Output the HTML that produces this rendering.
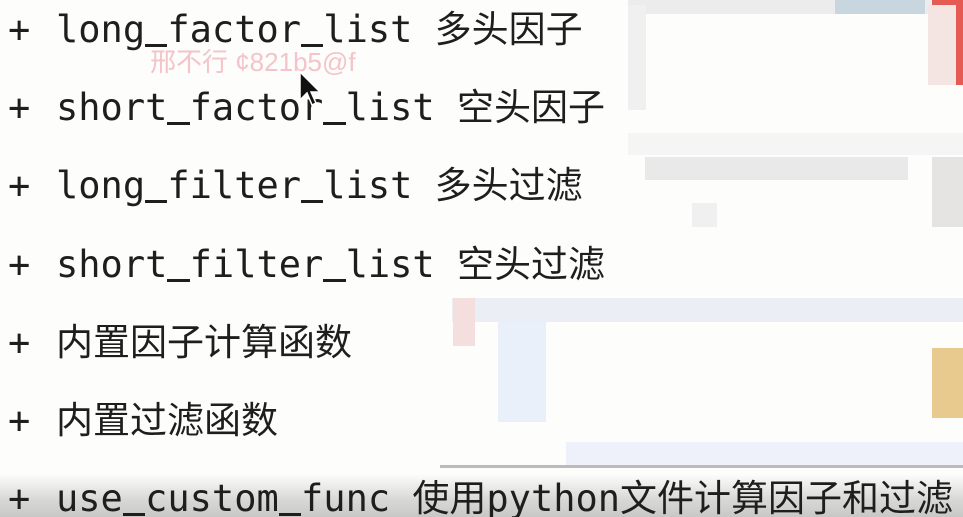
<!DOCTYPE html>
<html><head><meta charset="utf-8"><style>
html,body{margin:0;padding:0;width:963px;height:517px;overflow:hidden;background:#fdfdfc;position:relative}
.l{position:absolute;left:56px;font-family:"DejaVu Sans Mono","Liberation Mono","Noto Sans CJK SC",monospace;font-size:37px;line-height:60px;color:#1e1e1e;white-space:pre;z-index:2}
.p{position:absolute;left:8px;font-family:"DejaVu Sans Mono",monospace;font-size:37px;line-height:60px;color:#1e1e1e;z-index:2}
.u{display:inline-block;width:0.602em;height:3px;background:#1e1e1e;vertical-align:-5px}
.b{position:absolute}
</style></head><body>
<div class="b" style="left:628px;top:0;width:335px;height:14px;background:#ececec"></div>
<div class="b" style="left:835px;top:0;width:90px;height:14px;background:#c8d7df"></div>
<div class="b" style="left:932px;top:0;width:31px;height:85px;background:#e55a52"></div>
<div class="b" style="left:928px;top:5px;width:28px;height:80px;background:#f4e4e2"></div>
<div class="b" style="left:628px;top:5px;width:18px;height:105px;background:#f0f0f0"></div>
<div class="b" style="left:628px;top:133px;width:335px;height:22px;background:#f5f5f5"></div>
<div class="b" style="left:645px;top:157px;width:263px;height:23px;background:#e9e9e9"></div>
<div class="b" style="left:932px;top:157px;width:31px;height:70px;background:#e6e4e3"></div>
<div class="b" style="left:692px;top:203px;width:25px;height:24px;background:#f0f0f0"></div>
<div class="b" style="left:452px;top:298px;width:511px;height:24px;background:#eceef5"></div>
<div class="b" style="left:453px;top:298px;width:22px;height:48px;background:#f5dede"></div>
<div class="b" style="left:498px;top:322px;width:48px;height:100px;background:#eaf0fa"></div>
<div class="b" style="left:932px;top:348px;width:31px;height:70px;background:#e8c98e"></div>
<div class="b" style="left:566px;top:442px;width:397px;height:24px;background:#eef1f9"></div>
<div class="b" style="left:440px;top:465px;width:523px;height:3px;background:#bbb"></div>
<div class="b" style="left:0;top:474px;width:963px;height:43px;background:linear-gradient(#fdfdfc,#d8d8d6 60%,#c8c8c6)"></div>
<div class="b" style="left:150px;top:42px;width:240px;height:34px;font-family:'Liberation Sans','Noto Sans CJK SC',sans-serif;font-size:26px;color:#f4c4c8;z-index:3">邢不行 ¢821b5@f</div>
<svg class="b" style="left:298px;top:70px;z-index:4" width="26" height="40" viewBox="0 0 26 40"><path d="M2 2 L2 30 L9 23 L14 35 L18 33 L13 22 L22 22 Z" fill="#111" stroke="#fff" stroke-width="1.5"/></svg>
<div class="p" style="top:0px">+</div><div class="l" style="top:0px">long<span class="u"></span>factor<span class="u"></span>list 多头因子</div>
<div class="p" style="top:78px">+</div><div class="l" style="top:78px">short<span class="u"></span>factor<span class="u"></span>list 空头因子</div>
<div class="p" style="top:156px">+</div><div class="l" style="top:156px">long<span class="u"></span>filter<span class="u"></span>list 多头过滤</div>
<div class="p" style="top:235px">+</div><div class="l" style="top:235px">short<span class="u"></span>filter<span class="u"></span>list 空头过滤</div>
<div class="p" style="top:313px">+</div><div class="l" style="top:313px">内置因子计算函数</div>
<div class="p" style="top:391px">+</div><div class="l" style="top:391px">内置过滤函数</div>
<div class="p" style="top:469px">+</div><div class="l" style="top:469px">use<span class="u"></span>custom<span class="u"></span>func 使用python文件计算因子和过滤</div>
</body></html>
